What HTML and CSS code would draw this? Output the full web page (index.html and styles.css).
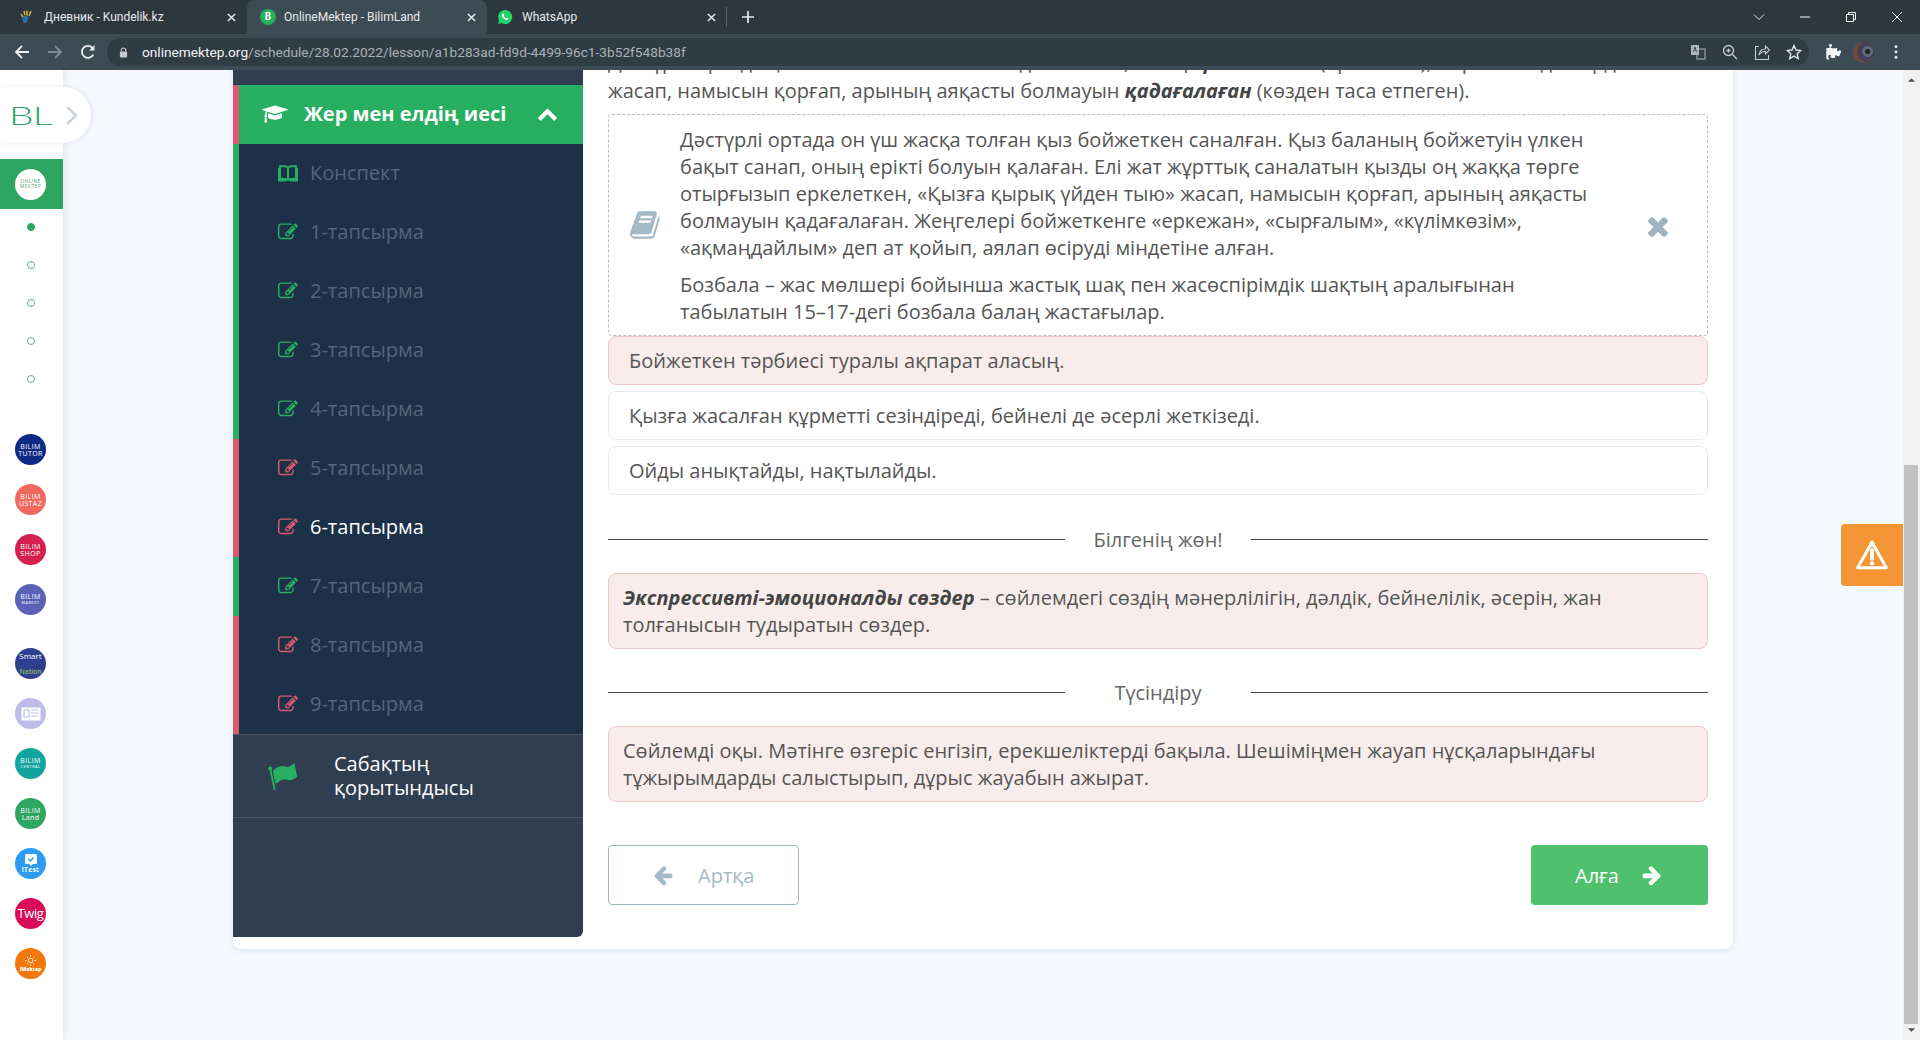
FILE: index.html
```html
<!DOCTYPE html>
<html lang="kk">
<head>
<meta charset="utf-8">
<title>OnlineMektep - BilimLand</title>
<link rel="stylesheet" href="styles.css">
</head>
<body>
<svg class="defs" width="0" height="0" aria-hidden="true">
  <defs>
    <symbol id="i-edit" viewBox="0 0 1792 1792"><path d="M888 1184l116-116-152-152-116 116v56h96v96h56zm440-720q-16-16-33 1l-350 350q-17 17-1 33t33-1l350-350q17-17 1-33zm80 594v190q0 119-84.5 203.5t-203.5 84.5h-832q-119 0-203.5-84.5t-84.5-203.5v-832q0-119 84.5-203.5t203.5-84.5h832q63 0 117 25 15 7 18 23 3 17-9 29l-49 49q-14 14-32 8-23-6-45-6h-832q-66 0-113 47t-47 113v832q0 66 47 113t113 47h832q66 0 113-47t47-113v-126q0-13 9-22l64-64q15-15 35-7t20 29zm-96-738l288 288-672 672h-288v-288zm444 132l-92 92-288-288 92-92q28-28 68-28t68 28l152 152q28 28 28 68t-28 68z"/></symbol>
    <symbol id="i-x" viewBox="0 0 10 10"><path d="M1 1l8 8M9 1l-8 8" fill="none" stroke="currentColor" stroke-width="1.5"/></symbol>
  </defs>
</svg>

<header class="chrome">
  <div class="tabstrip">
    <div class="tab tab-first">
      <svg class="fav" viewBox="0 0 16 16"><path d="M5 13c-1-3-1-5 1-6 2-1 4-.5 4 2s-1 5-3 5-2-1-2-1z" fill="#2a6fa8"/><path d="M3 5l2 3M6 2l1 4M9 1.500l0 5M13 2l-2 5" stroke="#d9b23c" stroke-width="1.500" fill="none"/></svg>
      <span class="tab-title">Дневник - Kundelik.kz</span>
      <svg class="tab-x"><use href="#i-x"/></svg>
    </div>
    <div class="tab tab-active">
      <span class="fav fav-b">B</span>
      <span class="tab-title">OnlineMektep - BilimLand</span>
      <svg class="tab-x"><use href="#i-x"/></svg>
    </div>
    <div class="tab tab-third">
      <svg class="fav" viewBox="0 0 16 16"><path d="M8 1a7 7 0 0 0-6 10.500L1 15l3.600-1A7 7 0 1 0 8 1z" fill="#25d366"/><path d="M5.800 4.400c-1 .6-1.200 2-.3 3.600 1 1.700 2.600 3 4 3 1 0 1.800-.7 1.800-1.500L9.800 8.600l-.9.800C8 9 7 8 6.700 7.100l.7-.9-.9-1.800z" fill="#fff"/></svg>
      <span class="tab-title">WhatsApp</span>
      <svg class="tab-x"><use href="#i-x"/></svg>
    </div>
    <span class="tab-sep"></span>
    <svg class="tab-plus" viewBox="0 0 12 12"><path d="M6 0v12M0 6h12" stroke="#e8eaed" stroke-width="1.700"/></svg>
    <div class="win-controls">
      <svg viewBox="0 0 12 12" class="win-ico"><path d="M1 3.500l5 5 5-5" fill="none" stroke="#dfe3e6" stroke-width="1"/></svg>
      <svg viewBox="0 0 12 12" class="win-ico"><path d="M1 6h10" stroke="#fff" stroke-width="1"/></svg>
      <svg viewBox="0 0 12 12" class="win-ico"><path d="M1.500 3.500h7v7h-7zM3.500 3.500v-2h7v7h-2" fill="none" stroke="#fff" stroke-width="1"/></svg>
      <svg viewBox="0 0 12 12" class="win-ico"><path d="M1 1l10 10M11 1L1 11" stroke="#fff" stroke-width="1"/></svg>
    </div>
  </div>
  <div class="toolbar">
    <svg class="nav-ico" viewBox="0 0 16 16"><path d="M15 8H2M8 2L2 8l6 6" fill="none" stroke="#eef1f3" stroke-width="1.800"/></svg>
    <svg class="nav-ico" viewBox="0 0 16 16"><path d="M1 8h13M8 2l6 6-6 6" fill="none" stroke="#7f8b92" stroke-width="1.800"/></svg>
    <svg class="nav-ico" viewBox="0 0 16 16"><path d="M13.300 10.500A6 6 0 1 1 12.400 3.800" fill="none" stroke="#eef1f3" stroke-width="1.800"/><path d="M14.500 1v5.500H9z" fill="#eef1f3"/></svg>
    <div class="omnibox">
      <svg class="lock" viewBox="0 0 10 12"><path d="M2.500 5V3.500a2.500 2.500 0 0 1 5 0V5" fill="none" stroke="#c5cbcf" stroke-width="1.200"/><rect x="1" y="5" width="8" height="6.500" rx="1" fill="#c5cbcf"/></svg>
      <span class="url"><b class="url-host">onlinemektep.org</b>/schedule/28.02.2022/lesson/a1b283ad-fd9d-4499-96c1-3b52f548b38f</span>
      <div class="omni-icons">
        <svg class="omni-ico" viewBox="0 0 16 16"><rect x="1" y="1" width="8" height="10" fill="#aeb6bb"/><rect x="7" y="5" width="8" height="10" fill="none" stroke="#aeb6bb"/><path d="M3.500 8l1.500-5 1.500 5M10 8h3M11.500 8c0 2-1 4-2 4.500" fill="none" stroke="#3c4b54"/></svg>
        <svg class="omni-ico" viewBox="0 0 16 16"><circle cx="6.500" cy="6.500" r="5" fill="none" stroke="#c5cbcf" stroke-width="1.300"/><path d="M10.500 10.500L15 15M4.500 6.500h4M6.500 4.500v4" stroke="#c5cbcf" stroke-width="1.300"/></svg>
        <svg class="omni-ico" viewBox="0 0 16 16"><path d="M5 1.500H1.500V14.500H14.500V10" fill="none" stroke="#c5cbcf" stroke-width="1.100" transform="translate(0 1)"/><path d="M5 11c.5-4 3-6 6.500-6V2l4 4-4 4V7.500c-3 0-5 1-6.500 3.500z" fill="none" stroke="#c5cbcf" stroke-width="1.100"/></svg>
        <svg class="omni-ico" viewBox="0 0 16 16"><path d="M8 1.500l2 4.500 4.800.5-3.600 3.200 1 4.800L8 12.100l-4.200 2.400 1-4.800L1.200 6.500 6 6z" fill="none" stroke="#dfe3e6" stroke-width="1.400"/></svg>
      </div>
    </div>
    <svg class="puzzle" viewBox="0 0 1792 1792"><path d="M1664 1098q0 81-44.500 135t-123.500 54q-41 0-77.500-17.500t-67-38.500-59-38.500-53.500-17.500q-80 0-80 90 0 28 11.500 79t11.500 78v12l-4 1q-16 5-39 10l-1 .5q-123 29-262 29-129 0-184-39-28-20-28-55 0-36 24-75t24-83q0-38-26-61t-66-23q-76 0-122 54t-46 130q0 43 16.500 88t36 85 36 73 16.500 54q-123 0-257-27-9-2-29-7l-28-7V400l28 6q25 5 39 6 80 8 181 8 48 0 81-24.500t33-72.500q0-29-16-53t-36-47-36-49-16-60q0-44 42-74t116-30q74 0 131 27t57 90q0 42-20 73t-44.500 57-44.500 55-20 67q0 32 26.500 52.500T1083 452q63 0 129-10t132-22l48-8v300q0 59 42 59 21 0 48-17.500t58-38 68-38 78-17.500q57 0 87.500 61t30.500 135z" fill="#f4f6f7"/></svg>
    <span class="avatar"></span>
    <svg class="menu" viewBox="0 0 4 16"><circle cx="2" cy="2" r="1.600"/><circle cx="2" cy="8" r="1.600"/><circle cx="2" cy="14" r="1.600"/></svg>
  </div>
</header>

<div class="window">
  <nav class="rail">
    <div class="rail-top">
      <div class="logo-tab">
        <span class="logo-bl">BL</span>
        <svg class="logo-chev" viewBox="0 0 12 20"><path d="M2 2l8 8-8 8" fill="none" stroke="#c9d1da" stroke-width="2.500"/></svg>
      </div>
    </div>
    <div class="rail-active"><span class="badge badge-white">ONLINE<br>MEKTEP</span></div>
    <ul class="dots">
      <li class="dot-row"><span class="dot dot-on"></span></li>
      <li class="dot-row"><span class="dot"></span></li>
      <li class="dot-row"><span class="dot"></span></li>
      <li class="dot-row"><span class="dot"></span></li>
      <li class="dot-row"><span class="dot"></span></li>
    </ul>
    <div class="rail-group rail-group-1">
      <span class="badge b-tutor">BILIM<br>TUTOR</span>
      <span class="badge b-ustaz">BILIM<br>USTAZ</span>
      <span class="badge b-shop">BILIM<br>SHOP</span>
      <span class="badge b-market">BILIM<br><small>MARKET</small></span>
    </div>
    <div class="rail-group rail-group-2">
      <span class="badge b-smart"><em>Smart</em><br><i>Nation</i></span>
      <span class="badge b-news"><svg class="news-ico" viewBox="0 0 20 14"><rect x=".5" y=".5" width="19" height="13" fill="#fff"/><path d="M3 3h5v7H3zM10 3h7M10 6h7M10 9h7" fill="none" stroke="#c0bce8" stroke-width="1.200"/></svg></span>
      <span class="badge b-center">BILIM<br><small>CENTRAL</small></span>
      <span class="badge b-land">BILIM<br>Land</span>
      <span class="badge b-itest"><svg class="itest-ico" viewBox="0 0 12 12"><path d="M1.500 0h9A1.500 1.500 0 0 1 12 1.500v7A1.500 1.500 0 0 1 10.500 10H8l-2 2-2-2H1.500A1.500 1.500 0 0 1 0 8.500v-7A1.500 1.500 0 0 1 1.500 0z" fill="#fff"/><path d="M3.500 5l2 2 3-3.500" fill="none" stroke="#2b9cf2" stroke-width="1.500"/></svg><b>iTest</b></span>
      <span class="badge b-twig">Twig</span>
      <span class="badge b-imek"><svg class="imek-ico" viewBox="0 0 12 12"><circle cx="6" cy="6" r="2.500" fill="none" stroke="#fff" stroke-width=".8"/><path d="M6 0v2M6 10v2M0 6h2M10 6h2M2 2l1.400 1.400M10 2L8.600 3.400M2 10l1.400-1.400M10 10L8.600 8.600" stroke="#fff" stroke-width=".8"/></svg><b>iMektep</b></span>
    </div>
  </nav>

  <main class="content">
    <div class="card">
      <aside class="side">
        <div class="side-top"></div>
        <div class="side-head">
          <svg class="cap" viewBox="0 0 2304 1792"><path d="M1774 836l18 316q4 69-82 128t-235 93.5-323 34.5-323-34.5-235-93.5-82-128l18-316 574 181q22 7 48 7t48-7zm530-324q0 23-22 31l-1120 352q-4 1-10 1t-10-1l-652-206q-43 34-71 111.500t-34 178.500q63 36 63 109 0 69-58 107l58 433q2 14-8 25-9 11-24 11h-192q-15 0-24-11-10-11-8-25l58-433q-58-38-58-107 0-73 65-111 11-207 98-330l-333-104q-22-8-22-31t22-31l1120-352q4-1 10-1t10 1l1120 352q22 8 22 31z"/></svg>
          <span class="side-head-text">Жер мен елдің иесі</span>
          <svg class="chev-up" viewBox="0 0 1792 1792"><path d="M1683 1331l-166 165q-19 19-45 19t-45-19l-531-531-531 531q-19 19-45 19t-45-19l-166-165q-19-19-19-45.500t19-45.500l742-741q19-19 45-19t45 19l742 741q19 19 19 45.500t-19 45.500z"/></svg>
        </div>
        <ul class="side-list">
          <li class="side-item ok">
            <svg class="item-ico" viewBox="0 0 20 18"><path d="M10 3.500C8 2 5 1.800 2 2.200V15c3-.4 6-.2 8 1.200 2-1.400 5-1.600 8-1.200V2.200c-3-.4-6-.2-8 1.300zM10 3.500v12.500M1 4v12.500h7M19 4v12.500h-7" fill="none" stroke="currentColor" stroke-width="2"/></svg>
            <span>Конспект</span>
          </li>
          <li class="side-item ok"><svg class="item-ico"><use href="#i-edit"/></svg><span>1-тапсырма</span></li>
          <li class="side-item ok"><svg class="item-ico"><use href="#i-edit"/></svg><span>2-тапсырма</span></li>
          <li class="side-item ok"><svg class="item-ico"><use href="#i-edit"/></svg><span>3-тапсырма</span></li>
          <li class="side-item ok"><svg class="item-ico"><use href="#i-edit"/></svg><span>4-тапсырма</span></li>
          <li class="side-item bad"><svg class="item-ico"><use href="#i-edit"/></svg><span>5-тапсырма</span></li>
          <li class="side-item bad current"><svg class="item-ico"><use href="#i-edit"/></svg><span>6-тапсырма</span></li>
          <li class="side-item ok"><svg class="item-ico"><use href="#i-edit"/></svg><span>7-тапсырма</span></li>
          <li class="side-item bad"><svg class="item-ico"><use href="#i-edit"/></svg><span>8-тапсырма</span></li>
          <li class="side-item bad"><svg class="item-ico"><use href="#i-edit"/></svg><span>9-тапсырма</span></li>
        </ul>
        <div class="side-foot">
          <svg class="flag" viewBox="0 0 1792 1792"><path d="M320 256q0 72-64 110v1266q0 13-9.500 22.500t-22.500 9.500h-64q-13 0-22.500-9.500t-9.500-22.500v-1266q-64-38-64-110 0-53 37.500-90.500t90.500-37.500 90.500 37.500 37.500 90.500zm1472 64v763q0 25-12.500 38.500t-39.500 27.500q-215 116-369 116-61 0-123.500-22t-108.500-48-115.500-48-142.500-22q-192 0-464 146-17 9-33 9-26 0-45-19t-19-45v-742q0-32 31-55 21-14 79-43 236-120 421-120 107 0 200 29t219 88q38 19 88 19 54 0 117.500-21t110-47 88-47 54.500-21q26 0 45 19t19 45z"/></svg>
          <span class="side-foot-text">Сабақтың<br>қорытындысы</span>
        </div>
      </aside>

      <section class="lesson">
        <p class="lead">Дәстүрлі ортада қыз баланы «бойжеткен» деп атаған, оның <b><i>еркелеткен</i></b> (еркелетіп), сырғалым деп әрдайым<br>жасап, намысын қорғап, арының аяқасты болмауын <b><i>қадағалаған</i></b> (көзден таса етпеген).</p>

        <div class="note">
          <div class="note-ico-col">
            <svg class="note-book" viewBox="0 0 1792 1792"><path d="M1639 478q40 57 18 129l-275 906q-19 64-76.500 107.500t-122.500 43.500h-923q-77 0-148.500-53.500t-99.500-131.500q-24-67-2-127 0-4 3-27t4-37q1-8-3-21.500t-3-19.500q2-11 8-21t16.500-23.500 16.500-23.500q23-38 45-91.500t30-91.500q3-10 .5-30t-.5-28q3-11 17-28t17-23q21-36 42-92t25-90q1-9-2.500-32t.5-28q4-13 22-30.500t22-22.500q19-26 42.500-84.500t27.500-96.500q1-8-3-25.500t-2-26.500q2-8 9-18t18-23 17-21q8-12 16.500-30.500t15-35 16-36 19.500-32 26.500-23.500 36-11.500 47.500 5.500l-1 3q38-9 51-9h761q74 0 114 56t18 130l-274 906q-36 119-71.500 153.500t-128.500 34.500h-869q-27 0-38 15-11 16-1 43 24 70 144 70h923q29 0 56-15.500t35-41.500l300-987q7-22 5-57 38 15 59 43zm-1064 2q-4 13 2 22.500t20 9.500h608q13 0 25.500-9.500t16.500-22.500l21-64q4-13-2-22.500t-20-9.500h-608q-13 0-25.500 9.500t-16.500 22.500zm-83 256q-4 13 2 22.500t20 9.500h608q13 0 25.500-9.500t16.500-22.500l21-64q4-13-2-22.500t-20-9.500h-608q-13 0-25.500 9.500t-16.500 22.500z"/></svg>
          </div>
          <div class="note-text">
            <p>Дәстүрлі ортада он үш жасқа толған қыз бойжеткен саналған. Қыз баланың бойжетуін үлкен бақыт санап, оның ерікті болуын қалаған. Елі жат жұрттық саналатын қызды оң жаққа төрге отырғызып еркелеткен, «Қызға қырық үйден тыю» жасап, намысын қорғап, арының аяқасты болмауын қадағалаған. Жеңгелері бойжеткенге «еркежан», «сырғалым», «күлімкөзім», «ақмаңдайлым» деп ат қойып, аялап өсіруді міндетіне алған.</p>
            <p>Бозбала – жас мөлшері бойынша жастық шақ пен жасөспірімдік шақтың аралығынан табылатын 15–17-дегі бозбала балаң жастағылар.</p>
          </div>
          <div class="note-x-col">
            <svg class="note-x" viewBox="0 0 1792 1792"><path d="M1490 1322q0 40-28 68l-136 136q-28 28-68 28t-68-28l-294-294-294 294q-28 28-68 28t-68-28l-136-136q-28-28-28-68t28-68l294-294-294-294q-28-28-28-68t28-68l136-136q28-28 68-28t68 28l294 294 294-294q28-28 68-28t68 28l136 136q28 28 28 68t-28 68l-294 294 294 294q28 28 28 68z"/></svg>
          </div>
        </div>

        <div class="answers">
          <div class="answer answer-wrong">Бойжеткен тәрбиесі туралы ақпарат аласың.</div>
          <div class="answer">Қызға жасалған құрметті сезіндіреді, бейнелі де әсерлі жеткізеді.</div>
          <div class="answer">Ойды анықтайды, нақтылайды.</div>
        </div>

        <div class="sep sep-first"><span class="sep-line"></span><span class="sep-text">Білгенің жөн!</span><span class="sep-line"></span></div>
        <div class="alert"><b><i>Экспрессивті-эмоционалды сөздер</i></b> – сөйлемдегі сөздің мәнерлілігін, дәлдік, бейнелілік, әсерін, жан толғанысын тудыратын сөздер.</div>

        <div class="sep"><span class="sep-line"></span><span class="sep-text">Түсіндіру</span><span class="sep-line"></span></div>
        <div class="alert">Сөйлемді оқы. Мәтінге өзгеріс енгізіп, ерекшеліктерді бақыла. Шешіміңмен жауап нұсқаларындағы тұжырымдарды салыстырып, дұрыс жауабын ажырат.</div>

        <div class="pager">
          <a class="btn btn-back">
            <svg class="btn-ico" viewBox="0 0 1792 1792"><path d="M1664 896v128q0 53-32.500 90.500t-84.500 37.500h-704l293 294q38 36 38 90t-38 90l-75 76q-37 37-90 37-52 0-91-37l-651-652q-37-37-37-90 0-52 37-91l651-650q38-38 91-38 52 0 90 38l75 74q38 38 38 91t-38 91l-293 293h704q52 0 84.500 37.500t32.500 90.500z"/></svg>
            <span>Артқа</span>
          </a>
          <a class="btn btn-next">
            <span>Алға</span>
            <svg class="btn-ico" viewBox="0 0 1792 1792"><path d="M1600 960q0 54-37 91l-651 651q-39 37-91 37-51 0-90-37l-75-75q-38-38-38-91t38-91l293-293h-704q-52 0-84.500-37.500t-32.500-90.500v-128q0-53 32.500-90.500t84.500-37.500h704l-293-294q-38-36-38-90t38-90l75-75q38-38 90-38 53 0 91 38l651 651q37 35 37 90z"/></svg>
          </a>
        </div>
      </section>
    </div>

    <div class="warn-tab">
      <svg class="warn-ico" viewBox="0 0 32 30"><path d="M16 3L2.500 27h27z" fill="none" stroke="#fff" stroke-width="3" stroke-linejoin="round"/><path d="M16 10.500v8" stroke="#fff" stroke-width="3.600" stroke-linecap="round"/><circle cx="16" cy="22.800" r="2" fill="#fff"/></svg>
    </div>
  </main>

  <div class="scrollbar">
    <svg class="sb-arrow" viewBox="0 0 10 6"><path d="M5 1l4 4H1z"/></svg>
    <div class="sb-track"><div class="sb-thumb"></div></div>
    <svg class="sb-arrow" viewBox="0 0 10 6"><path d="M5 5L1 1h8z"/></svg>
  </div>
</div>
</body>
</html>
```

FILE: styles.css
```css
* { box-sizing: border-box; }
html, body { margin: 0; padding: 0; height: 100%; }
body { width: 1920px; height: 1040px; overflow: hidden; display: flex; flex-direction: column; font-family: "Open Sans", "Noto Sans", sans-serif; color: #555; background: #f5f8fc; }
.defs { position: absolute; }
ul { list-style: none; margin: 0; padding: 0; }
p { margin: 0; }

/* browser chrome */
.chrome { height: 70px; flex: none; background: #3c4b54; font-family: Roboto, "Noto Sans", sans-serif; }
.tabstrip { height: 34px; background: #2c373e; display: flex; align-items: center; position: relative; padding-left: 7px; }
.tab { width: 240px; height: 34px; display: flex; align-items: center; padding: 0 11px 0 10px; color: #e8eaed; font-size: 12px; flex: none; }
.tab-active { background: #3c4b54; border-radius: 8px 8px 0 0; padding-left: 13px; }
.fav { width: 16px; height: 16px; margin-right: 9px; flex: none; }
.tab-first { padding-left: 11px; }
.tab-first .fav { margin-right: 10px; }
.tab-active .fav { margin-right: 8px; }
.fav-b { border-radius: 50%; background: #27ae60; color: #fff; font-size: 10px; line-height: 16px; text-align: center; font-weight: 600; }
.tab-title { flex: 1; white-space: nowrap; overflow: hidden; }
.tab-x { width: 9px; height: 9px; color: #eef1f3; flex: none; }
.tab-sep { width: 1px; height: 20px; background: #58656d; margin-left: -1px; flex: none; }
.tab-plus { width: 12px; height: 12px; margin-left: 15px; flex: none; }
.win-controls { margin-left: auto; display: flex; align-items: center; padding-right: 17px; gap: 34px; }
.win-ico { width: 12px; height: 12px; display: block; }
.toolbar { height: 36px; display: flex; align-items: center; position: relative; padding-left: 14px; }
.nav-ico { width: 16px; height: 16px; margin-right: 17px; flex: none; }
.omnibox { width: 1702px; height: 28px; margin-left: -6px; border-radius: 14px; background: #303c44; display: flex; align-items: center; padding-left: 12px; flex: none; }
.lock { width: 9px; height: 11px; flex: none; }
.url { margin-left: 14px; font: 13.700px/28px Roboto, sans-serif; color: #a8b2b8; white-space: nowrap; }
.url-host { color: #f1f3f4; font-weight: 400; }
.omni-icons { margin-left: auto; display: flex; gap: 16px; padding-right: 7px; }
.omni-ico { width: 16px; height: 16px; display: block; }
.puzzle { width: 17px; height: 17px; margin-left: 15px; flex: none; }
.avatar { width: 21px; height: 21px; margin-left: 12px; border-radius: 50%; flex: none; background: radial-gradient(circle at 70% 45%, #222 0 12%, #596a78 14% 28%, #4a3d55 30% 55%, #6f4a3d 58%); }
.menu { width: 4px; height: 14px; margin-left: 20px; fill: #e8eaed; flex: none; }

/* window */
.window { flex: 1; display: flex; min-height: 0; position: relative; overflow: hidden; }

/* rail */
.rail { width: 63px; flex: none; background: #fff; box-shadow: 2px 0 6px rgba(120,140,170,.15); display: flex; flex-direction: column; align-items: stretch; position: relative; z-index: 2; }
.rail-top { height: 89px; position: relative; }
.logo-tab { position: absolute; left: 0; top: 17px; width: 91px; height: 56px; border-radius: 0 28px 28px 0; background: #fff; box-shadow: 2px 0 4px rgba(120,140,170,.14); display: flex; align-items: center; }
.logo-bl { font: 300 25px/1 Lato, sans-serif; color: #2fa562; margin-left: 9px; width: 30px; display: block; transform: scaleX(1.55); transform-origin: left center; letter-spacing: -.5px; }
.logo-chev { width: 13px; height: 21px; margin-left: 26px; }
.rail-active { height: 50px; background: #2fa562; display: flex; align-items: center; justify-content: center; padding-right: 2px; }
.badge { width: 31px; height: 31px; border-radius: 50%; flex: none; display: flex; flex-direction: column; align-items: center; justify-content: center; text-align: center; color: #fff; font: 400 7px/7px "Open Sans", sans-serif; letter-spacing: .4px; overflow: hidden; }
.badge small { font-size: 4px; line-height: 6px; }
.badge-white { background: #fff; color: #5aaa82; font-size: 5px; line-height: 5.500px; }
.dots { margin-bottom: 35px; }
.dot-row { height: 38px; padding: 14px 2px 0 0; display: flex; justify-content: center; }
.dot { width: 8px; height: 8px; border-radius: 50%; border: 1.500px solid #6fa98c; }
.dot-on { background: #2fa562; border-color: #2fa562; }
.rail-group { display: flex; flex-direction: column; align-items: center; gap: 19px; padding-right: 2px; }
.rail-group-1 { margin-bottom: 33px; }
.b-tutor { background: #0f2a85; }
.b-ustaz { background: #f0695f; }
.b-shop { background: #d6204f; }
.b-market { background: #5a62b8; }
.b-smart { background: #2f3f8f; font-size: 8px; line-height: 8px; letter-spacing: 0; }
.b-smart em { font-style: normal; }
.b-smart i { font-style: normal; color: #a6d84a; font-size: 7px; }
.b-news { background: #c0bce8; }
.news-ico { width: 20px; height: 14px; }
.b-center { background: #12a59f; }
.b-land { background: #2fa562; }
.b-itest { background: #2b9cf2; }
.b-itest b { font-size: 6.500px; line-height: 8px; font-weight: 700; }
.itest-ico { width: 12px; height: 12px; }
.b-twig { background: #d90a5a; font-size: 13px; letter-spacing: -.4px; }
.b-imek { background: #f0780c; }
.b-imek b { font-size: 5px; line-height: 6px; font-weight: 800; letter-spacing: 0; }
.imek-ico { width: 11px; height: 11px; }

/* content */
.content { flex: 1; min-width: 0; padding-left: 170px; position: relative; }
.card { width: 1500px; margin-top: -40px; background: #fff; border-radius: 8px; box-shadow: 0 1px 6px rgba(120,140,170,.18); display: flex; padding: 0 25px 12px 0; }
.side { width: 350px; flex: none; background: #2f3e50; border-radius: 0 0 6px 0; }
.side-top { height: 55px; background: #2f3e50; }
.side-head { height: 59px; background: #27ae60; border-left: 6px solid #d9596f; display: flex; align-items: center; color: #fff; padding: 0 0 2px 23px; }
.cap { width: 26px; height: 20px; fill: #fff; flex: none; }
.side-head-text { font-size: 20px; font-weight: 700; margin-left: 16px; white-space: nowrap; flex: 1; }
.chev-up { width: 21px; height: 21px; fill: #fff; margin-right: 25px; flex: none; }
.side-list { background: #1c3048; }
.side-item { height: 59px; display: flex; align-items: center; padding: 0 0 2px 39px; border-left: 6px solid; font-size: 20px; color: #55667a; }
.side-item span { margin-left: 12px; }
.ok { border-left-color: #27ae60; }
.bad { border-left-color: #d9596f; }
.item-ico { width: 20px; height: 20px; flex: none; fill: currentColor; }
.ok .item-ico { color: #27ae60; fill: #27ae60; }
.bad .item-ico { color: #d9596f; fill: #d9596f; }
.current span { color: #fff; }
.side-foot { height: 84px; border-top: 1px solid #4a5868; border-bottom: 1px solid #4a5868; display: flex; align-items: center; padding-left: 36px; }
.flag { width: 28px; height: 28px; fill: #27ae60; transform: rotate(-12deg); flex: none; }
.side-foot-text { margin-left: 37px; color: #fff; font-size: 20px; line-height: 24px; }

.lesson { width: 1100px; margin-left: 25px; flex: none; padding: 17px 0 32px; font-size: 20px; line-height: 27px; color: #555; }
.lead { margin-bottom: 9px; white-space: nowrap; line-height: 29px; }
.note { height: 222px; border: 1px dashed #b5bec4; border-radius: 4px; display: flex; align-items: center; }
.note-ico-col { width: 71px; flex: none; display: flex; justify-content: center; padding-left: 3px; }
.note-book { width: 32px; height: 32px; fill: #a4b9c7; }
.note-text { width: 928px; flex: none; }
.note-text p + p { margin-top: 10px; }
.note-x-col { flex: 1; display: flex; justify-content: center; padding-top: 2px; }
.note-x { width: 30px; height: 30px; fill: #9db3c0; }
.answers { display: flex; flex-direction: column; gap: 6px; }
.answer { height: 49px; border: 1px solid #e8ecee; border-radius: 8px; padding: 10px 20px; background: #fff; }
.answer-wrong { background: #f9ecec; border-color: #ecc9c9; }
.sep { display: flex; align-items: center; margin: 30px 0 20px; color: #666; }
.sep-first { margin-top: 31px; }
.sep-line { flex: 1; height: 1px; background: #444; }
.sep-text { width: 186px; flex: none; text-align: center; }
.alert { border: 1px solid #ecc9c9; background: #f9ecec; border-radius: 8px; padding: 10px 14px; }
.alert b { color: #444; }
.lead b { color: #444; }
.pager { display: flex; justify-content: space-between; margin-top: 43px; }
.btn { height: 60px; border-radius: 4px; display: flex; align-items: center; font-size: 20px; }
.btn-back { width: 191px; border: 1px solid #9fb5c0; color: #a6bac5; padding-left: 43px; gap: 24px; }
.btn-next { width: 177px; background: #4fc16c; color: #fff; padding-left: 44px; gap: 22px; }
.btn-ico { width: 22px; height: 22px; fill: currentColor; flex: none; }

.warn-tab { position: absolute; right: 0; top: 454px; width: 62px; height: 62px; background: #f39533; border-radius: 4px 0 0 4px; display: flex; align-items: center; justify-content: center; z-index: 3; }
.warn-ico { width: 34px; height: 32px; }

/* scrollbar */
.scrollbar { width: 17px; flex: none; background: #f1f1f1; display: flex; flex-direction: column; align-items: center; padding: 7px 0; position: relative; }
.sb-arrow { width: 9px; height: 6px; fill: #505050; flex: none; }
.sb-track { flex: 1; width: 100%; padding: 382px 2px 3px 1px; }
.sb-thumb { height: 100%; background: #c1c1c1; }
```
